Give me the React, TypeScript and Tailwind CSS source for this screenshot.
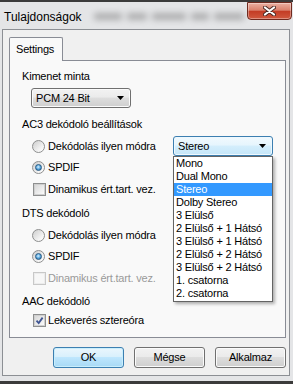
import React from 'react';

const items = [
  'Mono',
  'Dual Mono',
  'Stereo',
  'Dolby Stereo',
  '3 Elülső',
  '2 Elülső + 1 Hátsó',
  '3 Elülső + 1 Hátsó',
  '2 Elülső + 2 Hátsó',
  '3 Elülső + 2 Hátsó',
  '1. csatorna',
  '2. csatorna',
];

// blurred word shapes seen through the glass caption
const blurWords = [28, 20, 34, 18, 30];

const Arrow = () => (
  <svg width="7" height="4" viewBox="0 0 7 4">
    <path d="M0 0h7L3.5 4z" fill="#000" />
  </svg>
);

const Radio = ({ checked }: { checked?: boolean }) => (
  <span className="flex h-[13px] w-[13px] shrink-0 items-center justify-center rounded-full border border-[#8e8f8f] bg-[linear-gradient(135deg,#cdcdcd,#f4f4f4_70%,#ffffff)]">
    {checked && (
      <span className="h-[7px] w-[7px] rounded-full border border-[#275a84] bg-[radial-gradient(circle_at_45%_40%,#d9f2ff_0%,#5aa8df_50%,#1f5b8c_100%)]" />
    )}
  </span>
);

const Check = ({ checked, disabled }: { checked?: boolean; disabled?: boolean }) => (
  <span
    className={
      disabled
        ? 'flex h-[13px] w-[13px] shrink-0 items-center justify-center border border-[#c8c8c8] bg-[#f7f7f7]'
        : 'flex h-[13px] w-[13px] shrink-0 items-center justify-center border border-[#8e8f8f] bg-white'
    }
  >
    <span
      className={
        disabled
          ? 'flex h-[11px] w-[11px] items-center justify-center border border-[#ececec]'
          : 'flex h-[11px] w-[11px] items-center justify-center border border-[#cfcfcf] bg-[linear-gradient(135deg,#d8d8d8,#fbfbfb)]'
      }
    >
      {checked && (
        <svg width="9" height="9" viewBox="0 0 9 9">
          <path d="M1.5 4.6L3.7 7L7.6 1.6" fill="none" stroke="#3f5592" strokeWidth="1.8" />
        </svg>
      )}
    </span>
  </span>
);

const Btn = ({ children, primary }: { children: React.ReactNode; primary?: boolean }) => (
  <div
    className={
      primary
        ? 'flex h-[21px] w-[71px] items-center justify-center rounded-[3px] border border-[#3c7fb1] bg-[linear-gradient(#eaf6fd,#d9f0fc_45%,#bee6fd_50%,#a7d9f5)] shadow-[inset_0_0_0_1px_#c9eefc]'
        : 'flex h-[21px] w-[71px] items-center justify-center rounded-[3px] border border-[#707070] bg-[linear-gradient(#f2f2f2,#ebebeb_45%,#dddddd_50%,#cfcfcf)] shadow-[inset_0_0_0_1px_#fbfbfb]'
    }
  >
    {children}
  </div>
);

export default function App() {
  return (
    <div className="flex h-[384px] w-[293px] flex-col overflow-hidden bg-[#3b3b3b] pt-[2px] font-['Liberation_Sans',Arial,sans-serif] text-[11px] tracking-[-0.2px] text-black">
      <div className="flex h-[379px] flex-col bg-[#e4e5e7] pl-[2px] pr-[3px] pb-[5px]">
        {/* title bar */}
        <div className="flex h-[27px] items-start">
          <span className="mt-[6px] pl-[2px] text-[12px] tracking-normal">Tulajdonságok</span>
          <div className="ml-[12px] mt-[11px] flex gap-[5px] opacity-45 blur-[3px]">
            {blurWords.map((w, i) => (
              <span key={i} className="h-[7px] rounded-[2px] bg-[#6a6a6a]" style={{ width: w }} />
            ))}
          </div>
          <div className="-mr-[2px] ml-auto flex h-[18px] w-[45px] items-center justify-center rounded-b-[4px] border border-[#6f2a1f] bg-[linear-gradient(#eab0a2,#d9806c_45%,#c43c25_52%,#d0593f)] shadow-[inset_0_0_0_1px_rgba(255,255,255,0.35)]">
            <svg width="13" height="10" viewBox="0 0 13 10">
              <path d="M2 1.5L11 8.5M11 1.5L2 8.5" stroke="#4a2a25" strokeWidth="4" strokeLinecap="round" />
              <path d="M2 1.5L11 8.5M11 1.5L2 8.5" stroke="#ffffff" strokeWidth="2.2" strokeLinecap="round" />
            </svg>
          </div>
        </div>

        {/* client area */}
        <div className="flex flex-1 flex-col border border-[#8c8f94] bg-[#f0f0f0] pl-[6px] pt-[7px]">
          <div className="flex h-[23px]">
            <div className="relative z-10 -mb-px flex h-[24px] w-[54px] items-center rounded-t-[2px] border border-b-0 border-[#898c95] bg-[#f9f9f9] pl-[6px]">
              Settings
            </div>
          </div>

          <div className="flex h-[278px] w-[277px] flex-col border border-[#898c95] bg-[#f9f9f9] pl-[12px] pt-[5px]">
            <div className="flex h-[20px] items-center">Kimenet minta</div>
            <div className="mt-[2px] ml-[9px] flex h-[20px] w-[100px] items-center justify-between rounded-[3px] border border-[#707070] bg-[linear-gradient(#f2f2f2,#ebebeb_45%,#dddddd_50%,#cfcfcf)] pl-[4px] pr-[6px] shadow-[inset_0_0_0_1px_#fbfbfb]">
              <span>PCM 24 Bit</span>
              <Arrow />
            </div>

            <div className="mt-[6px] flex h-[20px] items-center">AC3 dekódoló beállítások</div>
            <div className="mt-[2px] flex h-[20px] items-center pl-[10px]">
              <Radio />
              <span className="ml-[3px] whitespace-nowrap">Dekódolás ilyen módra</span>
              <div className="relative ml-auto mr-[12px] shrink-0">
                <div className="flex h-[20px] w-[100px] items-center justify-between rounded-[3px] border border-[#3c7fb1] bg-[linear-gradient(#f1f9fe,#e6f5fd_45%,#d4eefc_50%,#c4e6f9)] pl-[4px] pr-[6px] shadow-[inset_0_0_0_1px_#eef8fe]">
                  <span>Stereo</span>
                  <Arrow />
                </div>
                <div className="absolute left-0 top-full z-20 w-[100px] border border-[#646464] bg-white pb-[1px] shadow-[2px_2px_3px_rgba(0,0,0,0.3)]">
                  {items.map((it) => (
                    <div
                      key={it}
                      className={
                        it === 'Stereo'
                          ? 'h-[13px] whitespace-nowrap bg-[#3399ff] pl-[2px] leading-[13px] text-white'
                          : 'h-[13px] whitespace-nowrap pl-[2px] leading-[13px]'
                      }
                    >
                      {it}
                    </div>
                  ))}
                </div>
              </div>
            </div>
            <div className="mt-[1px] flex h-[20px] items-center pl-[10px]">
              <Radio checked />
              <span className="ml-[3px]">SPDIF</span>
            </div>
            <div className="mt-[2px] flex h-[20px] items-center pl-[11px]">
              <Check />
              <span className="ml-[2px]">Dinamikus ért.tart. vez.</span>
            </div>

            <div className="mt-[4px] flex h-[20px] items-center">DTS dekódoló</div>
            <div className="mt-[2px] flex h-[20px] items-center pl-[10px]">
              <Radio />
              <span className="ml-[3px]">Dekódolás ilyen módra</span>
            </div>
            <div className="mt-[1px] flex h-[20px] items-center pl-[10px]">
              <Radio checked />
              <span className="ml-[3px]">SPDIF</span>
            </div>
            <div className="mt-[2px] flex h-[20px] items-center pl-[11px]">
              <Check disabled />
              <span className="ml-[2px] text-[#9a9a9a]">Dinamikus ért.tart. vez.</span>
            </div>

            <div className="mt-[4px] flex h-[18px] items-center">AAC dekódoló</div>
            <div className="flex h-[20px] items-center pl-[11px]">
              <Check checked />
              <span className="ml-[2px]">Lekeverés sztereóra</span>
            </div>
          </div>

          <div className="mt-[9px] flex w-[277px] justify-end gap-[10px]">
            <Btn primary>OK</Btn>
            <Btn>Mégse</Btn>
            <Btn>Alkalmaz</Btn>
          </div>
        </div>
      </div>
    </div>
  );
}
